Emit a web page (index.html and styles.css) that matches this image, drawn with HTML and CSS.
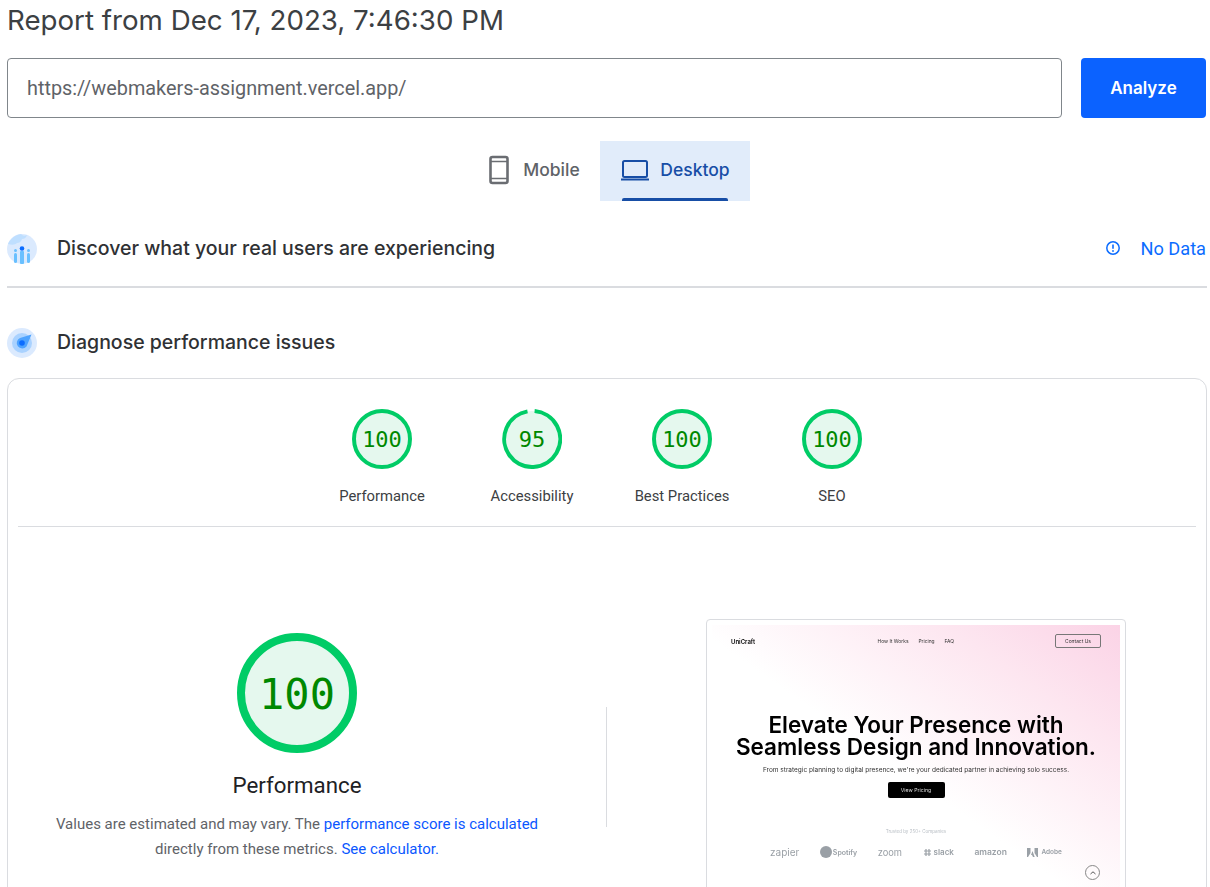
FILE: index.html
```html
<!DOCTYPE html>
<html lang="en">
<head>
    <meta charset="UTF-8">
    <meta name="viewport" content="width=device-width, initial-scale=1.0">
    <title>PageSpeed Insights</title>
    <link rel="stylesheet" href="styles.css">
</head>
<body>
    <div class="page">
        <h1 class="report-title">Report from Dec 17, 2023, 7:46:30 PM</h1>

        <form class="url-form">
            <div class="url-input">https://webmakers-assignment.vercel.app/</div>
            <button type="button" class="analyze-btn">Analyze</button>
        </form>

        <div class="tabs">
            <div class="tab">
                <svg width="24" height="30" viewBox="0 0 24 30"><rect x="3.5" y="2" width="17" height="26" rx="2" fill="none" stroke="#6a6d72" stroke-width="2.6"/><path d="M3.5 6.5h17M3.5 23.5h17" stroke="#6a6d72" stroke-width="1.6"/></svg>
                <span>Mobile</span>
            </div>
            <div class="tab active">
                <svg width="30" height="24" viewBox="0 0 30 24"><rect x="3" y="3" width="24" height="16" rx="1.5" fill="none" stroke="#174ea6" stroke-width="2"/><path d="M1 21.5h28" stroke="#174ea6" stroke-width="2"/></svg>
                <span>Desktop</span>
            </div>
        </div>

        <section class="section-row field-row">
            <svg class="section-icon" width="30" height="30" viewBox="0 0 30 30">
                <circle cx="15" cy="15" r="15" fill="#dbeafe"/>
                <path d="M1 10C3 5 8 1 14 0c2 2 3 2 6 1-1 3-3 4-5 4-1 3-3 4-5 4-2 2-5 2-9 1z" fill="#bfdfff"/>
                <rect x="7" y="19" width="3" height="10" rx="1.5" fill="#69c0ff"/>
                <rect x="13" y="17" width="4" height="13" rx="1" fill="#69c0ff"/>
                <rect x="20" y="19" width="3" height="10" rx="1.5" fill="#69c0ff"/>
                <circle cx="8.5" cy="16.5" r="1.5" fill="#69c0ff"/>
                <circle cx="21.5" cy="16.5" r="1.5" fill="#69c0ff"/>
                <circle cx="15" cy="14.5" r="2.3" fill="#0b6cff"/>
            </svg>
            <h2 class="section-title">Discover what your real users are experiencing</h2>
            <div class="no-data">
                <svg width="16" height="16" viewBox="0 0 16 16"><circle cx="8" cy="8" r="6.2" fill="none" stroke="#0b6cff" stroke-width="1.5"/><path d="M8 4.5v4.2" stroke="#0b6cff" stroke-width="1.6"/><circle cx="8" cy="11" r="0.9" fill="#0b6cff"/></svg>
                <span>No Data</span>
            </div>
        </section>

        <section class="section-row diagnose-row">
            <svg class="section-icon" width="30" height="30" viewBox="0 0 30 30">
                <circle cx="15" cy="15" r="15" fill="#dbeafe"/>
                <circle cx="15" cy="15" r="10" fill="#a9d2ff"/>
                <path d="M24.500 6.500L19.500 18.500A5.500 5.500 0 1 1 13 10z" fill="#4da3ff"/>
                <circle cx="15" cy="15" r="2.800" fill="#0b6cff"/>
            </svg>
            <h2 class="section-title">Diagnose performance issues</h2>
        </section>

        <div class="card">
            <div class="score-row">
                <div class="score-item">
                    <div class="gauge">
                        <svg viewBox="0 0 60 60"><circle cx="30" cy="30" r="28" fill="#e5f8ee" stroke="#00cc66" stroke-width="4"/></svg>
                        <span class="gauge-num">100</span>
                    </div>
                    <div class="score-label">Performance</div>
                </div>
                <div class="score-item">
                    <div class="gauge">
                        <svg viewBox="0 0 60 60"><circle cx="30" cy="30" r="28" fill="#e5f8ee"/><path d="M32.6 2.1A28 28 0 1 1 25.5 2.4" fill="none" stroke="#00cc66" stroke-width="4"/></svg>
                        <span class="gauge-num">95</span>
                    </div>
                    <div class="score-label">Accessibility</div>
                </div>
                <div class="score-item">
                    <div class="gauge">
                        <svg viewBox="0 0 60 60"><circle cx="30" cy="30" r="28" fill="#e5f8ee" stroke="#00cc66" stroke-width="4"/></svg>
                        <span class="gauge-num">100</span>
                    </div>
                    <div class="score-label">Best Practices</div>
                </div>
                <div class="score-item">
                    <div class="gauge">
                        <svg viewBox="0 0 60 60"><circle cx="30" cy="30" r="28" fill="#e5f8ee" stroke="#00cc66" stroke-width="4"/></svg>
                        <span class="gauge-num">100</span>
                    </div>
                    <div class="score-label">SEO</div>
                </div>
            </div>

            <div class="detail">
                <div class="detail-left">
                    <div class="gauge gauge-big">
                        <svg viewBox="0 0 120 120"><circle cx="60" cy="60" r="56" fill="#e5f8ee" stroke="#00cc66" stroke-width="8"/></svg>
                        <span class="gauge-num">100</span>
                    </div>
                    <div class="detail-title">Performance</div>
                    <p class="detail-text">Values are estimated and may vary. The <a href="#">performance score is calculated</a> directly from these metrics. <a href="#">See calculator.</a></p>
                </div>
                <div class="detail-divider"></div>
                <div class="shot-frame">
                    <div class="shot">
                        <div class="shot-nav">
                            <span class="shot-brand">UniCraft</span>
                            <span class="shot-links"><span>How It Works</span><span>Pricing</span><span>FAQ</span></span>
                            <span class="shot-contact">Contact Us</span>
                        </div>
                        <div class="shot-hero">Elevate Your Presence with<br>Seamless Design and Innovation.</div>
                        <div class="shot-sub">From strategic planning to digital presence, we're your dedicated partner in achieving solo success.</div>
                        <div class="shot-cta">View Pricing</div>
                        <div class="shot-trusted">Trusted by 250+ Companies</div>
                        <div class="shot-logos">
                            <span class="logo-zapier">zapier</span>
                            <span class="logo-spotify"><i class="spotify-dot"></i>Spotify</span>
                            <span class="logo-zoom">zoom</span>
                            <span class="logo-slack"><svg width="9" height="9" viewBox="0 0 9 9"><path d="M3 1v7M6 1v7M1 3h7M1 6h7" stroke="#9aa0a6" stroke-width="1.2"/></svg>slack</span>
                            <span class="logo-amazon">amazon</span>
                            <span class="logo-adobe"><svg width="11" height="9" viewBox="0 0 11 9"><path d="M0 0h3.500v5L1 9H0zM7.500 0H11v9h-1L7.500 5zM5.500 3l2.200 6H6L5 7H4z" fill="#9aa0a6"/></svg>Adobe</span>
                        </div>
                        <div class="shot-up">
                            <svg width="8" height="6" viewBox="0 0 8 6"><path d="M1.5 4L4 1.8 6.500 4" fill="none" stroke="#444" stroke-width="0.9"/></svg>
                        </div>
                    </div>
                </div>
            </div>
        </div>
    </div>
</body>
</html>
```

FILE: styles.css
```css
* {
    box-sizing: border-box;
}

html, body {
    margin: 0;
    padding: 0;
    height: 887px;
    overflow: hidden;
    background-color: #fff;
}

body {
    font-family: Roboto, Arial, sans-serif;
    color: #202124;
}

.page {
    padding: 0 3px 0 7px;
}

.report-title {
    margin: 0;
    height: 58px;
    padding-top: 2px;
    font-family: Inter, sans-serif;
    font-size: 27.7px;
    line-height: 36px;
    font-weight: 400;
    color: #3c4043;
}

.url-form {
    display: flex;
    gap: 19px;
    padding-right: 1px;
}

.url-input {
    flex: 1;
    height: 60px;
    border: 1px solid #80868b;
    border-radius: 4px;
    padding-left: 19px;
    font-size: 19.85px;
    line-height: 60px;
    color: #5f6368;
}

.analyze-btn {
    width: 125px;
    height: 60px;
    background-color: #0b62ff;
    color: #fff;
    border: none;
    border-radius: 4px;
    font-family: Inter, sans-serif;
    font-size: 17px;
    font-weight: 600;
}

.tabs {
    display: flex;
    justify-content: center;
    margin-top: 23px;
    padding-left: 15px;
}

.tab {
    display: flex;
    align-items: center;
    justify-content: center;
    gap: 12px;
    width: 120px;
    height: 60px;
    padding-right: 12px;
    padding-bottom: 3px;
    font-family: Inter, sans-serif;
    font-size: 17.5px;
    font-weight: 500;
    color: #5f6368;
    position: relative;
}

.tab.active {
    width: 150px;
    gap: 10px;
    padding-right: 0;
    padding-left: 1px;
    background-color: #e1ecfa;
    color: #174ea6;
}

.tab.active::after {
    content: "";
    position: absolute;
    left: 22px;
    right: 22px;
    bottom: 0;
    height: 3px;
    border-radius: 2px 2px 0 0;
    background-color: #174ea6;
}

.section-row {
    display: flex;
    align-items: center;
    gap: 20px;
}

.field-row {
    height: 87px;
    padding-top: 20px;
    padding-bottom: 9px;
    border-bottom: 2px solid #dadce0;
}

.diagnose-row {
    height: 90px;
    padding-top: 20px;
}

.section-icon {
    flex: none;
}

.section-title {
    margin: -2px 0 0;
    font-family: Inter, sans-serif;
    font-size: 19.5px;
    font-weight: 500;
    color: #2f3134;
}

.no-data {
    margin-left: auto;
    margin-top: -2px;
    padding-right: 1px;
    display: flex;
    align-items: center;
    gap: 19px;
    font-size: 18.2px;
    color: #0b6cff;
}

.card {
    border: 1px solid #dadce0;
    border-radius: 12px;
    height: 700px;
    padding: 0 10px;
}

.score-row {
    display: flex;
    justify-content: center;
    height: 148px;
    padding-top: 30px;
    border-bottom: 1px solid #dadce0;
}

.score-item {
    width: 150px;
    display: flex;
    flex-direction: column;
    align-items: center;
}

.gauge {
    position: relative;
    width: 60px;
    height: 60px;
}

.gauge svg {
    display: block;
    width: 100%;
    height: 100%;
}

.gauge-num {
    position: absolute;
    inset: 0;
    display: flex;
    align-items: center;
    justify-content: center;
    font-family: "DejaVu Sans Mono", monospace;
    font-size: 22px;
    color: #008800;
}

.score-label {
    margin-top: 17px;
    font-size: 14.8px;
    line-height: 20px;
    color: #3c4043;
}

.detail {
    display: flex;
    align-items: flex-start;
    padding-top: 92px;
}

.detail-left {
    width: 558px;
    display: flex;
    flex-direction: column;
    align-items: center;
    padding-top: 14px;
    margin-left: -10px;
    padding-left: 20px;
}

.gauge-big {
    width: 120px;
    height: 120px;
}

.gauge-big .gauge-num {
    padding-top: 2px;
    font-size: 42px;
}

.detail-title {
    margin-top: 16px;
    font-size: 22.3px;
    line-height: 32px;
    color: #202124;
}

.detail-text {
    margin: 11px 0 0;
    width: 500px;
    text-align: center;
    font-size: 15px;
    line-height: 25px;
    color: #5f6368;
}

.detail-text a {
    color: #0b57ff;
    text-decoration: none;
}

.detail-divider {
    width: 1px;
    height: 120px;
    margin: 88px 0 0 40px;
    background-color: #dadce0;
}

.shot-frame {
    margin-left: 99px;
    width: 420px;
    height: 290px;
    border: 1px solid #dadce0;
    border-radius: 4px;
    padding: 5px;
}

.shot {
    position: relative;
    height: 270px;
    background: linear-gradient(215deg, #fbd3e6 0%, #fde6f0 22%, #fff 54%, #fff 100%);
    font-family: Inter, sans-serif;
    color: #000;
    text-align: center;
    overflow: hidden;
    filter: blur(0.25px);
}

.shot-nav {
    display: flex;
    align-items: center;
    height: 16px;
    margin-top: 8px;
    padding: 0 19px;
    font-size: 4.9px;
}

.shot-brand {
    font-weight: 600;
    font-size: 6px;
}

.shot-links {
    display: flex;
    gap: 10px;
    margin-left: 122.5px;
    color: #333;
}

.shot-contact {
    margin-left: auto;
    width: 46px;
    height: 14px;
    line-height: 12px;
    border: 1px solid #777;
    border-radius: 2px;
    color: #333;
}

.shot-hero {
    margin-top: 65px;
    font-size: 22.5px;
    line-height: 22px;
    font-weight: 600;
}

.shot-sub {
    margin-top: 8px;
    font-size: 6.5px;
    line-height: 9px;
    color: #333;
}

.shot-cta {
    width: 57px;
    height: 16px;
    margin: 7px auto 0;
    line-height: 16px;
    border-radius: 2px;
    background-color: #000;
    color: #ddd;
    font-size: 5.2px;
}

.shot-trusted {
    margin-top: 31px;
    font-size: 4.5px;
    color: #b8bec4;
}

.shot-logos {
    display: flex;
    justify-content: space-between;
    align-items: center;
    margin-top: 12px;
    padding: 0 58px;
    color: #9aa0a6;
    font-size: 9px;
    font-weight: 600;
}

.logo-zapier {
    font-size: 10px;
    font-weight: 400;
}

.logo-spotify {
    display: flex;
    align-items: center;
    gap: 1px;
    font-size: 7px;
}

.spotify-dot {
    width: 12px;
    height: 12px;
    border-radius: 50%;
    background-color: #9aa0a6;
}

.logo-zoom {
    font-size: 9.3px;
    font-weight: 400;
}

.logo-slack {
    display: flex;
    align-items: center;
    gap: 2px;
    font-size: 8px;
}

.logo-amazon {
    font-size: 8.5px;
}

.logo-adobe {
    display: flex;
    align-items: center;
    gap: 3px;
    font-size: 6.5px;
}

.shot-up {
    position: absolute;
    top: 240px;
    right: 20px;
    width: 15px;
    height: 15px;
    display: flex;
    align-items: center;
    justify-content: center;
    border: 1px solid #888;
    border-radius: 50%;
}
```
